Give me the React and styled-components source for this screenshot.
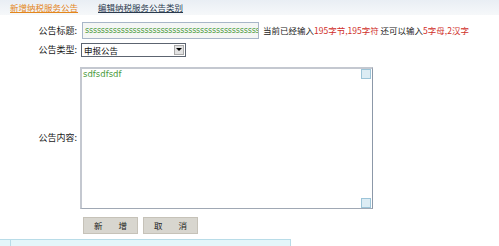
import React from "react";
import styled, { createGlobalStyle } from "styled-components";

const Global = createGlobalStyle`
  html, body { margin: 0; padding: 0; background: #fff; }
  body { width: 499px; height: 246px; overflow: hidden; font-family: "Noto Sans CJK SC", "Noto Sans", sans-serif; }
`;

const Page = styled.div`
  width: 499px;
  height: 246px;
  display: flex;
  flex-direction: column;
  overflow: hidden;
`;

const TabBar = styled.div`
  height: 18px;
  display: flex;
  align-items: center;
  gap: 20px;
  padding-left: 10px;
  background: linear-gradient(#e9eef4, #f6f8fa);
`;

const Tab = styled.a`
  font-size: 8.5px;
  line-height: 10px;
  text-decoration: underline;
  color: ${(p) => (p.$active ? "#e3861c" : "#2a3a4e")};
  cursor: pointer;
`;

const Form = styled.div`
  display: grid;
  grid-template-columns: 78px auto;
  column-gap: 3px;
  align-items: center;
  padding-top: 7px;
`;

const Label = styled.div`
  font-size: 9px;
  color: #222;
  text-align: right;
  padding-right: 1px;
`;

const Field = styled.div`
  display: flex;
  align-items: center;
  margin-left: ${(p) => p.$ml || 0}px;
  margin-top: ${(p) => p.$mt || 0}px;
`;

const TextInput = styled.div`
  width: 173px;
  height: 15px;
  border: 1px solid #a8b6c8;
  background: #f4f6f4;
  color: #4a9a3a;
  font-size: 8px;
  line-height: 15px;
  padding-left: 2px;
  overflow: hidden;
  white-space: nowrap;
  font-family: "DejaVu Sans", sans-serif;
  letter-spacing: -0.2px;
`;

const Hint = styled.span`
  font-size: 8.5px;
  color: #222;
  margin-left: 4px;
  white-space: nowrap;
`;

const Red = styled.span`
  color: #d0302a;
`;

const Select = styled.div`
  width: 103px;
  height: 12px;
  border: 1px solid #5c6470;
  display: flex;
  align-items: center;
  background: #fff;
`;

const SelectText = styled.span`
  flex: 1;
  font-size: 8.5px;
  padding-left: 2px;
  color: #111;
`;

const SelectBtn = styled.span`
  width: 10px;
  height: 10px;
  margin-right: 1px;
  background: #e2e2e2;
  border: 1px solid #aaa;
  box-sizing: border-box;
  display: flex;
  align-items: center;
  justify-content: center;
  &::after {
    content: "";
    border-left: 3px solid transparent;
    border-right: 3px solid transparent;
    border-top: 3px solid #000;
  }
`;

const TextArea = styled.div`
  width: 290px;
  height: 139px;
  border-top: 2px solid #c4c8d0;
  border-left: 2px solid #c4c8d0;
  border-right: 1px solid #8c98a8;
  border-bottom: 1px solid #a0a8b4;
  display: flex;
`;

const AreaText = styled.div`
  flex: 1;
  color: #4a9a3a;
  font-size: 8.5px;
  line-height: 10px;
  font-family: "DejaVu Sans", sans-serif;
  padding-left: 1px;
`;

const Scroll = styled.div`
  width: 11px;
  display: flex;
  flex-direction: column;
  justify-content: space-between;
`;

const ScrollBtn = styled.div`
  width: 10px;
  height: 10px;
  background: #dcecf4;
  border: 1px solid #9cc4d8;
  box-sizing: border-box;
`;

const Buttons = styled.div`
  display: flex;
  gap: 5px;
  margin-left: 83px;
  margin-top: 8px;
`;

const Button = styled.button`
  width: 55px;
  height: 17px;
  padding: 0;
  border: 1px solid #c6c2b8;
  background: #d8d6cf;
  font-size: 8.5px;
  color: #222;
  font-family: "Noto Sans CJK SC", sans-serif;
  word-spacing: 14px;
  letter-spacing: 0;
  display: flex;
  align-items: center;
  justify-content: center;
  gap: 16px;
`;

const Status = styled.div`
  margin-top: 5px;
  width: 290px;
  height: 8px;
  background: #e4f6fa;
  border-top: 1px solid #b8dce8;
  border-right: 1px solid #b8dce8;
  display: flex;
`;

const StatusCell = styled.div`
  width: 10px;
  border-right: 1px solid #b8dce8;
`;

export default function App() {
  return (
    <Page>
      <Global />
      <TabBar>
        <Tab $active>新增纳税服务公告</Tab>
        <Tab>编辑纳税服务公告类别</Tab>
      </TabBar>
      <Form>
        <Label>公告标题:</Label>
        <Field $ml={1}>
          <TextInput>{"s".repeat(60)}</TextInput>
          <Hint>
            当前已经输入<Red>195字节,195字符</Red> 还可以输入<Red>5字母,2汉字</Red>
          </Hint>
        </Field>
        <Label style={{ marginTop: 4 }}>公告类型:</Label>
        <Field $mt={4}>
          <Select>
            <SelectText>申报公告</SelectText>
            <SelectBtn />
          </Select>
        </Field>
        <Label style={{ marginTop: 10 }}>公告内容:</Label>
        <Field $ml={-1} $mt={10}>
          <TextArea>
            <AreaText>sdfsdfsdf</AreaText>
            <Scroll>
              <ScrollBtn />
              <ScrollBtn />
            </Scroll>
          </TextArea>
        </Field>
      </Form>
      <Buttons>
        <Button><span>新</span><span>增</span></Button>
        <Button><span>取</span><span>消</span></Button>
      </Buttons>
      <Status>
        <StatusCell />
      </Status>
    </Page>
  );
}
